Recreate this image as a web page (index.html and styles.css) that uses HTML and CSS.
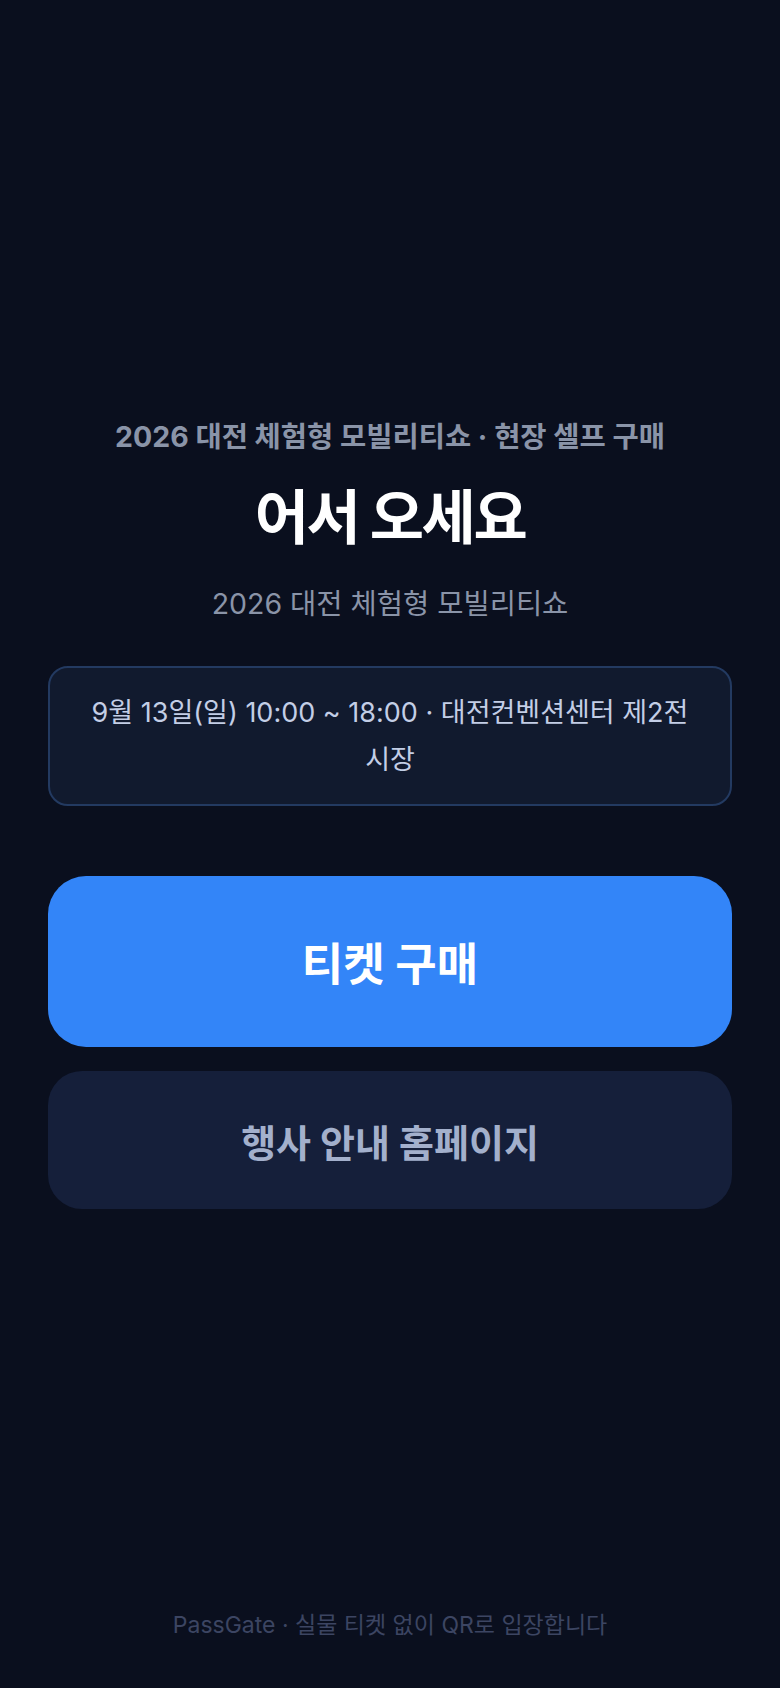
FILE: index.html
```html
<!DOCTYPE html>
<html lang="ko">
<head>
    <meta charset="UTF-8">
    <meta name="viewport" content="width=device-width, initial-scale=1.0">
    <title>PassGate · 현장 셀프 구매</title>
    <link rel="stylesheet" href="styles.css">
</head>
<body>
<div class="page">
    <main class="welcome">
        <p class="eyebrow">2026 대전 체험형 모빌리티쇼 · 현장 셀프 구매</p>
        <h1 class="title">어서 오세요</h1>
        <p class="event-name">2026 대전 체험형 모빌리티쇼</p>

        <div class="event-info">
            9월 13일(일) 10:00 ~ 18:00 · 대전컨벤션센터 제2전시장
        </div>

        <div class="actions">
            <button class="btn btn-primary" type="button">티켓 구매</button>
            <button class="btn btn-secondary" type="button">행사 안내 홈페이지</button>
        </div>
    </main>

    <footer class="footer">PassGate · 실물 티켓 없이 QR로 입장합니다</footer>
</div>
</body>
</html>
```

FILE: styles.css
```css
:root {
    --bg: #0a0f1e;
    --card: #111a2e;
    --card-border: #233a61;
    --primary: #3385f8;
    --secondary: #151f3a;
    --text-muted: #8a94a8;
    --text-info: #c3cee6;
    --text-secondary: #a3b0cc;
    --text-footer: #3c4562;
}
* {
    box-sizing: border-box;
}
body {
    margin: 0;
    background-color: var(--bg);
    color: #ffffff;
    font-family: Inter, "Noto Sans CJK KR", sans-serif;
}
.page {
    min-height: 100vh;
    display: flex;
    flex-direction: column;
    padding: 0 48px;
}
.welcome {
    flex: 1;
    display: flex;
    flex-direction: column;
    justify-content: center;
    text-align: center;
    padding-top: 19px;
}
.eyebrow {
    margin: 0;
    font-size: 28.5px;
    line-height: 36px;
    font-weight: 700;
    color: var(--text-muted);
}
.title {
    margin: 29px 0 0;
    font-size: 59px;
    line-height: 67px;
    font-weight: 700;
    letter-spacing: -2.5px;
}
.event-name {
    margin: 35px 0 0;
    font-size: 28.5px;
    line-height: 36px;
    font-weight: 400;
    color: var(--text-muted);
}
.event-info {
    margin-top: 44px;
    padding: 21px 36px;
    background-color: var(--card);
    border: 2px solid var(--card-border);
    border-radius: 20px;
    font-size: 27px;
    line-height: 47px;
    color: var(--text-info);
}
.actions {
    margin-top: 70px;
    display: flex;
    flex-direction: column;
    gap: 24px;
}
.btn {
    width: 100%;
    border: none;
    font-family: inherit;
    font-weight: 700;
    cursor: pointer;
}
.btn-primary {
    height: 171px;
    border-radius: 38px;
    background-color: var(--primary);
    color: #ffffff;
    font-size: 45px;
}
.btn-secondary {
    height: 138px;
    border-radius: 34px;
    background-color: var(--secondary);
    color: var(--text-secondary);
    font-size: 38px;
}
.footer {
    padding: 0 0 46px;
    text-align: center;
    font-size: 23px;
    line-height: 33px;
    color: var(--text-footer);
}
```
